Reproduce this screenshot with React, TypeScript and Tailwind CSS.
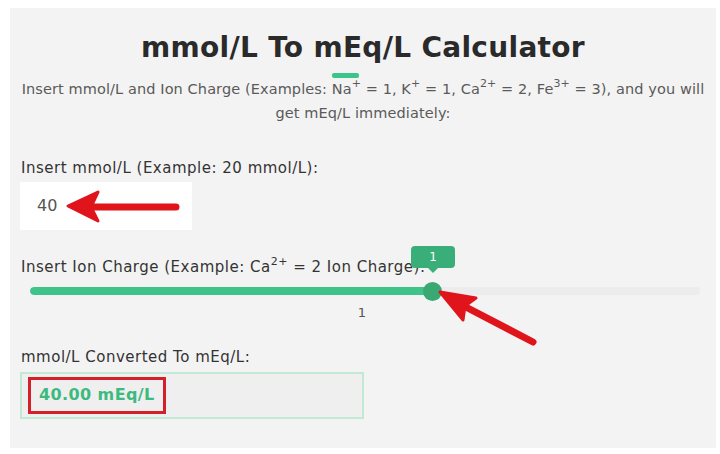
const font = { fontFamily: '"DejaVu Sans", "Noto Sans", sans-serif' };

function Sup({ children }: { children: React.ReactNode }) {
  return <sup className="text-[11px] relative -top-[7px]">{children}</sup>;
}

export default function App() {
  return (
    <div className="w-[720px] h-[454px] bg-white pt-[8px] pl-[10px] relative overflow-hidden" style={font}>
      <div className="w-[706px] h-[440px] bg-[#f3f3f3] flex flex-col">
        {/* header */}
        <h1 className="text-[28px] font-bold text-[#2a2a2a] text-center mt-[22px] leading-[36px] tracking-[0.3px]">
          mmol/L To mEq/L Calculator
        </h1>
        <p className="text-[14.5px] text-[#5a5a5a] text-center leading-[24px] mt-[11px] tracking-[0.1px]">
          Insert mmol/L and Ion Charge (Examples:{" "}
          <span className="relative">
            <span className="absolute -top-[8px] left-0 w-[27px] h-[5px] rounded-[2px] bg-[#3cc48a]"></span>
            Na<Sup>+</Sup>
          </span>{" "}
          = 1, K<Sup>+</Sup> = 1, Ca<Sup>2+</Sup> = 2, Fe<Sup>3+</Sup> = 3), and you will
          <br />
          get mEq/L immediately:
        </p>

        {/* mmol/L input */}
        <div className="mt-[34px] pl-[11px] text-[15px] text-[#333] leading-[18px] tracking-[0.5px]">
          Insert mmol/L (Example: 20 mmol/L):
        </div>
        <div className="ml-[10px] mt-[5px] w-[172px] h-[48px] bg-white flex items-center pl-[17px] text-[16px] text-[#555]">40</div>

        {/* ion charge slider */}
        <div className="mt-[28px] pl-[11px] text-[15px] text-[#333] leading-[18px] tracking-[0.5px]">
          Insert Ion Charge (Example: Ca<Sup>2+</Sup> = 2 Ion Charge):
        </div>
        <div className="relative mt-[7px] ml-[20px] w-[670px] h-[16px] flex items-center">
          <div className="w-full h-[8px] rounded-full bg-[#ececec] overflow-hidden">
            <div className="w-[403px] h-full rounded-full bg-[#3ec488]"></div>
          </div>
          <div className="absolute left-[393px] top-[-1px] w-[19px] h-[19px] rounded-full bg-[#39a873]"></div>
          <div className="absolute left-[381px] top-[-37px] w-[44px] h-[22px] rounded-[4px] bg-[#3aae78] text-white text-[12px] flex items-center justify-center">
            1
            <span className="absolute -bottom-[5px] left-[17px] w-0 h-0 border-l-[5px] border-r-[5px] border-t-[5px] border-l-transparent border-r-transparent border-t-[#3aae78]"></span>
          </div>
        </div>
        <div className="text-center text-[13px] text-[#555] mt-[4px] pr-[2px]">1</div>

        {/* result */}
        <div className="mt-[25px] pl-[11px] text-[15px] text-[#333] leading-[18px] tracking-[0.5px]">
          mmol/L Converted To mEq/L:
        </div>
        <div className="ml-[10px] mt-[6px] w-[344px] h-[47px] bg-[#efefef] border-2 border-[#c2e8d6] flex items-center pl-[6px]">
          <div className="border-[3px] border-[#d3202a] h-[37px] px-[8px] flex items-center text-[16px] font-bold text-[#3cba7f] tracking-[0.4px]">
            40.00 mEq/L
          </div>
        </div>
      </div>

      {/* red annotation arrows */}
      <svg className="absolute left-0 top-0 pointer-events-none" width="720" height="454">
        <line x1="176" y1="207" x2="88" y2="207" stroke="#e0141b" strokeWidth="7" strokeLinecap="round" />
        <polygon points="68,206 98,192 91,207 98,221" fill="#e0141b" strokeLinejoin="round" stroke="#e0141b" strokeWidth="3" />
        <line x1="533" y1="342" x2="460" y2="304" stroke="#e0141b" strokeWidth="7" strokeLinecap="round" />
        <polygon points="440,292 476,298 465,306 463,320" fill="#e0141b" strokeLinejoin="round" stroke="#e0141b" strokeWidth="3" />
      </svg>
    </div>
  );
}
